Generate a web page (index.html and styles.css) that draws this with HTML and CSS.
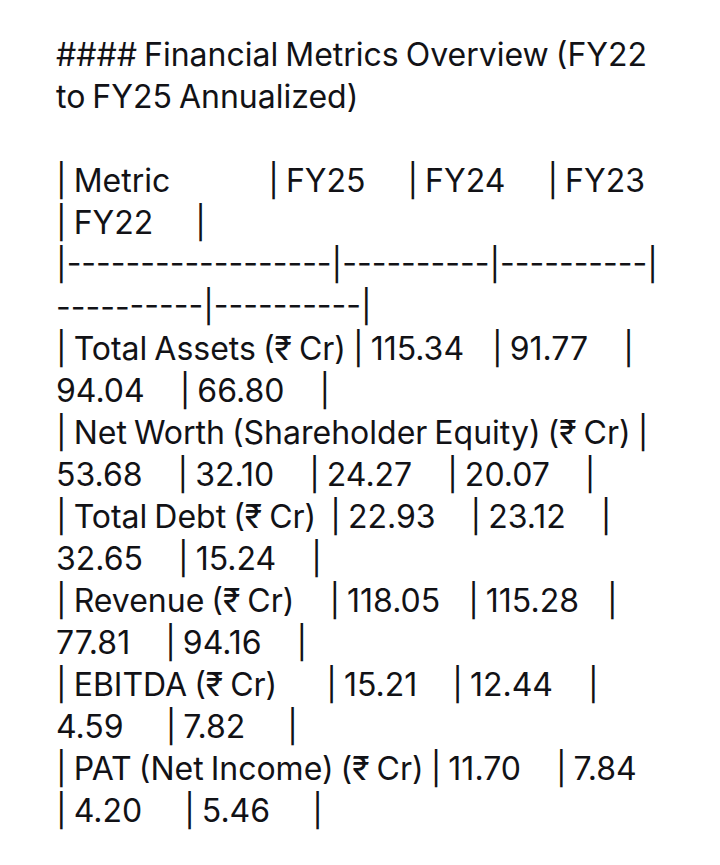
FILE: index.html
```html
<!DOCTYPE html>
<html lang="en">
<head>
<meta charset="utf-8">
<title>Financial Metrics Overview</title>
<link rel="stylesheet" href="styles.css">
</head>
<body>
<main class="page">
<div class="md">#### Financial Metrics Overview (FY22 to FY25 Annualized)

| Metric              | FY25      | FY24      | FY23      | FY22      |
|------------------|----------|----------|<wbr>----------|----------|
| Total Assets (₹ Cr) | 115.34    | 91.77     | 94.04     | 66.80     |
| Net Worth (Shareholder Equity) (₹ Cr) | 53.68     | 32.10     | 24.27     | 20.07     |
| Total Debt (₹ Cr)  | 22.93     | 23.12     | 32.65     | 15.24     |
| Revenue (₹ Cr)     | 118.05    | 115.28    | 77.81     | 94.16     |
| EBITDA (₹ Cr)       | 15.21     | 12.44     | 4.59      | 7.82      |
| PAT (Net Income) (₹ Cr) | 11.70     | 7.84      | 4.20      | 5.46      |</div>
</main>
</body>
</html>
```

FILE: styles.css
```css
html, body {
  margin: 0;
  padding: 0;
  background: #ffffff;
}

.page {
  padding: 34px 0 0 56px;
  width: 606px;
}

.md {
  font-family: Inter, "Noto Sans", sans-serif;
  font-size: 32px;
  line-height: 42px;
  word-spacing: -2px;
  color: #121216;
  white-space: pre-wrap;
}
```
